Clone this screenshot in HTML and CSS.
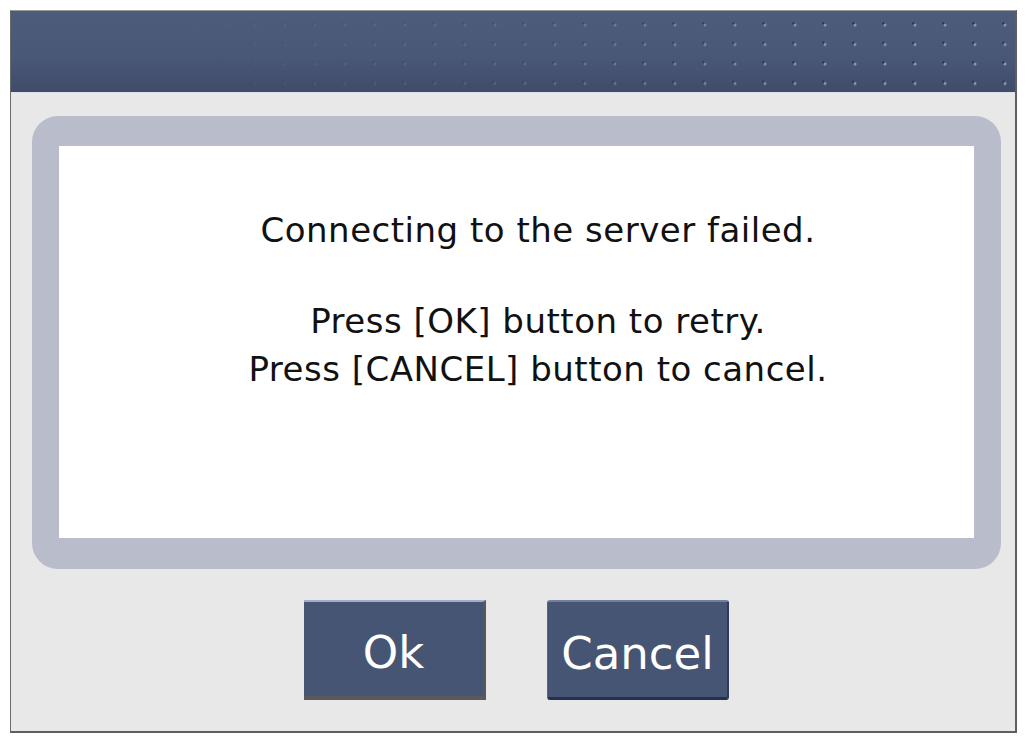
FILE: index.html
```html
<!DOCTYPE html>
<html>
<head>
<meta charset="utf-8">
<link rel="stylesheet" href="styles.css">
</head>
<body>
<div class="frame">
  <div class="header"></div>
  <div class="content">
    <div class="panel">
      <div class="message">
        <p class="line">Connecting to the server failed.</p>
        <div class="group">
          <p class="line">Press [OK] button to retry.</p>
          <p class="line">Press [CANCEL] button to cancel.</p>
        </div>
      </div>
    </div>
    <div class="buttons">
      <button class="btn btn-ok">Ok</button>
      <button class="btn btn-cancel">Cancel</button>
    </div>
  </div>
</div>
</body>
</html>
```
FILE: styles.css
```css
html, body {
  margin: 0;
  padding: 0;
  background: #ffffff;
}

.frame {
  box-sizing: border-box;
  margin: 10px 0 0 10px;
  width: 1007px;
  height: 723px;
  border: 1px solid #6a6a6a;
  border-top-color: #9a9a9a;
  border-right: 2px solid #5e5e5e;
  border-bottom: 2px solid #5e5e5e;
  background: #e8e8e8;
  display: flex;
  flex-direction: column;
}

.header {
  position: relative;
  height: 81px;
  flex: none;
  background: linear-gradient(to bottom, #4e5c7c 0%, #4a5877 55%, #3f4b69 100%);
  border-bottom: 1px solid #dde1ec;
}

.header::after {
  content: "";
  position: absolute;
  inset: 0;
  background-image:
    radial-gradient(circle at 3px 3px, rgba(140, 156, 188, 0.95) 1.2px, transparent 1.8px),
    radial-gradient(circle at 1.5px 1.5px, rgba(40, 50, 75, 0.9) 1px, transparent 1.6px);
  background-size: 30px 19.5px, 30px 19.5px;
  background-position: 811px 11px, 811px 11px;
  -webkit-mask-image: linear-gradient(to right, transparent 15%, rgba(0,0,0,0.3) 50%, #000 82%);
  mask-image: linear-gradient(to right, transparent 15%, rgba(0,0,0,0.3) 50%, #000 82%);
}

.content {
  flex: 1;
  display: flex;
  flex-direction: column;
  padding: 23px 14px 0 21px;
}

.panel {
  box-sizing: border-box;
  height: 453px;
  border-style: solid;
  border-color: #b8bccb;
  border-width: 30px 27px 31px 27px;
  border-radius: 26px;
  background: #ffffff;
}

.message {
  padding: 60px 0 0 43px;
  text-align: center;
  font-family: "DejaVu Sans", sans-serif;
  font-size: 34px;
  letter-spacing: 0.5px;
  color: #111111;
}

.line {
  margin: 0;
  line-height: 48px;
}

.group {
  margin-top: 43px;
}

.buttons {
  display: flex;
  justify-content: center;
  gap: 61px;
  margin-top: 31px;
}

.btn {
  box-sizing: border-box;
  width: 182px;
  height: 100px;
  padding: 6px 0 0 0;
  background: #475574;
  color: #ffffff;
  font-family: "DejaVu Sans", sans-serif;
  font-size: 45px;
  line-height: 1;
  cursor: pointer;
}

.btn-ok {
  border: none;
  border-top: 2px solid #a3aec6;
  border-right: 3px solid #585858;
  border-bottom: 4px solid #5a5a5a;
}

.btn-cancel {
  border-radius: 3px;
  border: 1px solid #56648a;
  border-top: 2px solid #7180a0;
  border-right: 2px solid #2f3b57;
  border-bottom: 3px solid #25324f;
  padding-top: 8px;
}
```
